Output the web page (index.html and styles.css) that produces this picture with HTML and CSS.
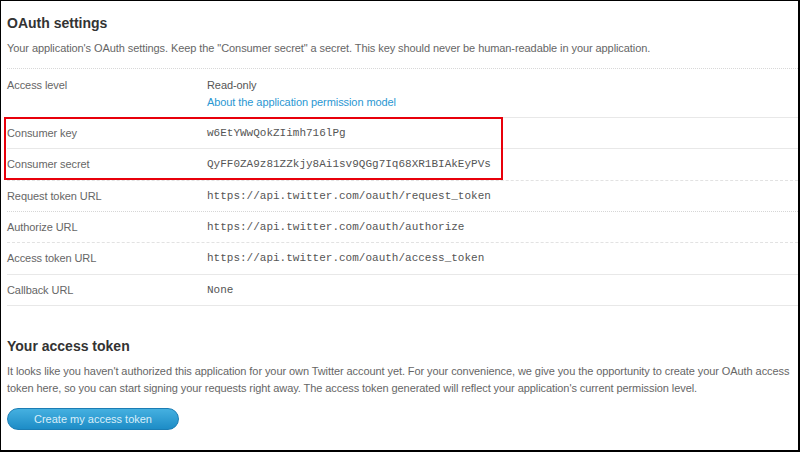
FILE: index.html
```html
<!DOCTYPE html>
<html>
<head>
<meta charset="utf-8">
<link rel="stylesheet" href="styles.css">
</head>
<body>
<div class="frame">
  <section class="section">
    <h2 class="title">OAuth settings</h2>
    <p class="desc dotted">Your application's OAuth settings. Keep the "Consumer secret" a secret. This key should never be human-readable in your application.</p>
    <div class="table">
      <div class="row first">
        <div class="label">Access level</div>
        <div class="value">
          <div class="plain">Read-only</div>
          <a class="link" href="#">About the application permission model</a>
        </div>
      </div>
      <div class="row">
        <div class="label">Consumer key</div>
        <div class="value mono">w6EtYWwQokZIimh716lPg</div>
      </div>
      <div class="row dashed tall">
        <div class="label">Consumer secret</div>
        <div class="value mono">QyFF0ZA9z81ZZkjy8Ai1sv9QGg7Iq68XR1BIAkEyPVs</div>
      </div>
      <div class="row dotted">
        <div class="label">Request token URL</div>
        <div class="value mono">https://api.twitter.com/oauth/request_token</div>
      </div>
      <div class="row dashed">
        <div class="label">Authorize URL</div>
        <div class="value mono">https://api.twitter.com/oauth/authorize</div>
      </div>
      <div class="row tall">
        <div class="label">Access token URL</div>
        <div class="value mono">https://api.twitter.com/oauth/access_token</div>
      </div>
      <div class="row">
        <div class="label">Callback URL</div>
        <div class="value mono">None</div>
      </div>
      <div class="highlight"></div>
    </div>
  </section>
  <section class="section second">
    <h2 class="title">Your access token</h2>
    <p class="desc">It looks like you haven't authorized this application for your own Twitter account yet. For your convenience, we give you the opportunity to create your OAuth access token here, so you can start signing your requests right away. The access token generated will reflect your application's current permission level.</p>
    <button class="btn">Create my access token</button>
  </section>
</div>
</body>
</html>
```
FILE: styles.css
```css
html, body {
  margin: 0;
  padding: 0;
  background: #fff;
}
.frame {
  box-sizing: border-box;
  width: 800px;
  height: 452px;
  border-top: 1px solid #000;
  border-left: 1px solid #000;
  border-right: 2px solid #000;
  border-bottom: 2px solid #000;
  padding: 0 0 0 6px;
  font-family: "Liberation Sans", Arial, sans-serif;
  font-size: 11px;
  letter-spacing: -0.08px;
  color: #666;
  overflow: hidden;
}
.title {
  margin: 12px 0 0;
  font-size: 14px;
  line-height: 20px;
  font-weight: bold;
  letter-spacing: 0;
  color: #333;
}
.desc {
  margin: 7px 0 0;
  padding-top: 1px;
  line-height: 17px;
}
.desc.dotted {
  margin-top: 6px;
  padding-bottom: 11px;
  border-bottom: 1px dotted #d8d8d8;
}
.table {
  position: relative;
  margin-right: 0;
}
.row {
  display: flex;
  padding: 7px 0 6px;
  line-height: 17px;
  border-bottom: 1px solid #e8e8e8;
}
.row.first {
  padding-top: 8px;
}
.row.tall {
  padding-bottom: 7px;
}
.row.dashed {
  border-bottom: 1px dashed #e2e2e2;
}
.row.dotted {
  border-bottom: 1px dotted #d6d6d6;
}
.label {
  width: 200px;
  flex: none;
  color: #666;
}
.value {
  color: #555;
}
.plain {
  color: #555;
}
.link {
  color: #2a97d2;
  text-decoration: none;
}
.mono {
  font-family: "Liberation Mono", "Courier New", monospace;
  font-size: 11px;
  letter-spacing: 0;
  color: #555;
}
.highlight {
  position: absolute;
  left: -3px;
  top: 48px;
  width: 499px;
  height: 63px;
  box-sizing: border-box;
  border: 2px solid #e8000b;
}
.second .title {
  margin-top: 30px;
}
.second .desc {
  margin-top: 6px;
}
.btn {
  margin-top: 11px;
  width: 172px;
  height: 22px;
  padding: 0;
  border: 1px solid #1b7db4;
  border-radius: 11px;
  background: linear-gradient(#45b0e0, #1d8cc6);
  color: #d9eef9;
  font-family: "Liberation Sans", Arial, sans-serif;
  font-size: 11px;
  line-height: 20px;
  text-align: center;
}
```
